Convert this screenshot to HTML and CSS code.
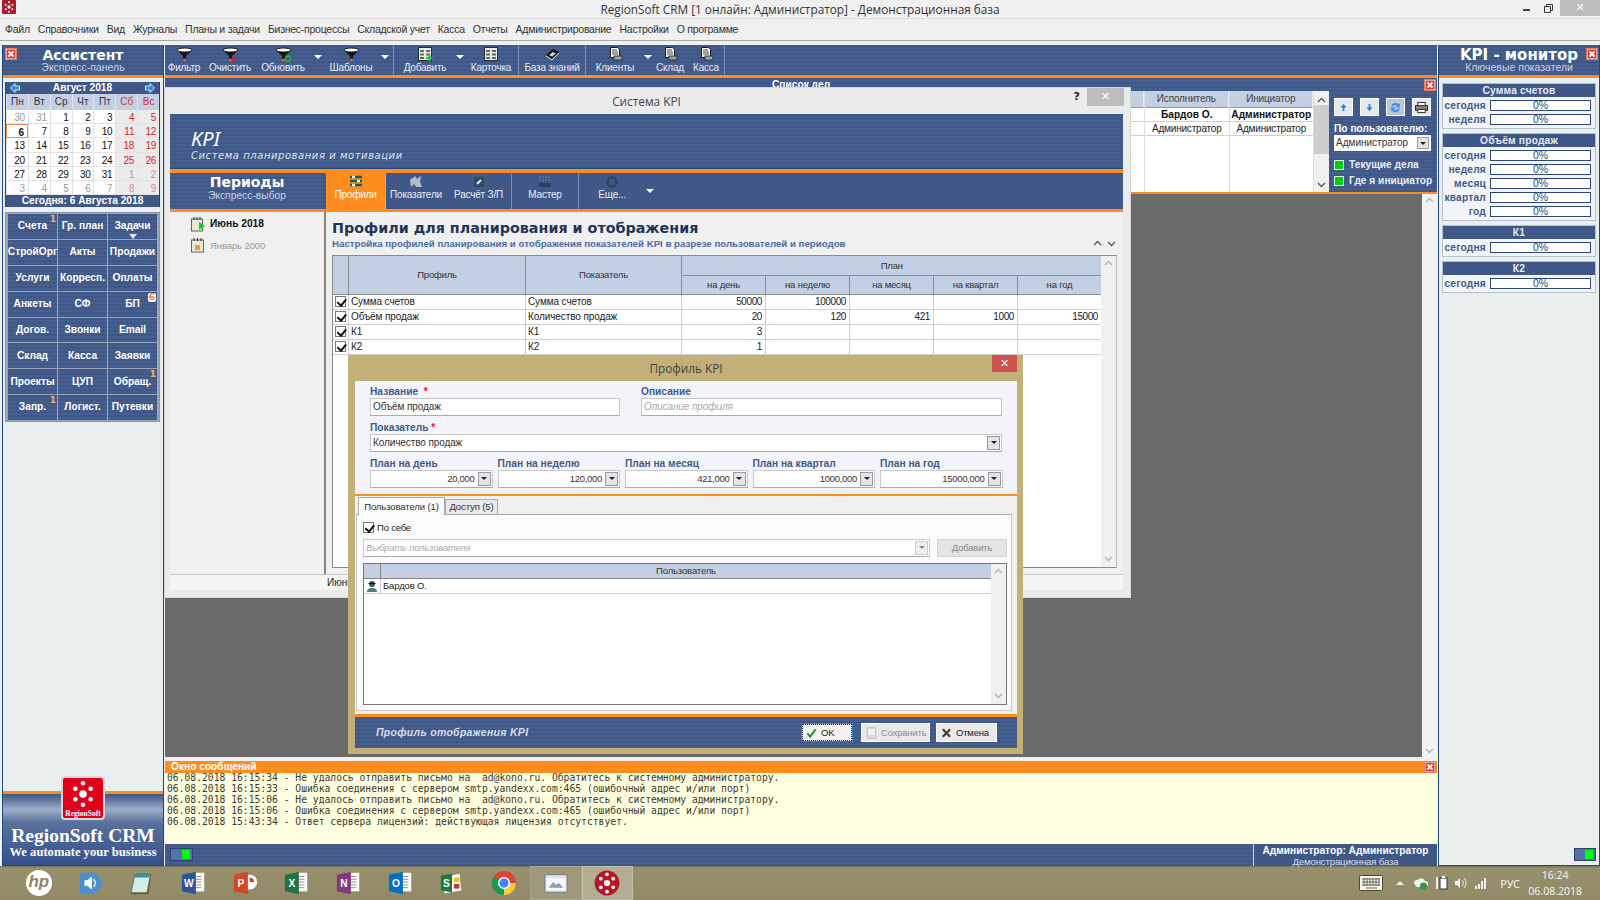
FILE: index.html
```html
<!DOCTYPE html>
<html lang="ru">
<head>
<meta charset="utf-8">
<title>RegionSoft CRM</title>
<link rel="stylesheet" href="styles.css">
</head>
<body>
<svg class="defs" aria-hidden="true">
  <defs>
    <g id="funnel"><path d="M3 4 8 9v3h3V9l5-5z" fill="#161616"/><ellipse cx="9.500" cy="3" rx="7.500" ry="2" fill="#fff" stroke="#111"/><circle cx="9.500" cy="13" r="1.500" fill="#e8642a"/></g>
    <g id="sheet"><rect x=".5" y=".5" width="13" height="13" fill="#e9eee6" stroke="#24302c"/><path d="M2 3h4v2H2zM2 6.500h4v2H2zM2 10h4v2H2zM8 3h4v2H8zM8 6.500h4v2H8zM8 10h4v2H8z" fill="#5d6b68"/></g>
    <g id="stack"><path d="M2.500.5h7l2 2v8h-9z" fill="#fff" stroke="#1b1b1b"/><path d="M4 3h5M4 5h6M4 7h6" stroke="#444"/><rect x="6" y="9" width="8" height="4" fill="#9aa5a0" stroke="#2c3a35"/></g>
    <g id="red-close"><rect x=".5" y=".5" width="11" height="11" fill="#fff" stroke="#e07a60"/><rect x="1.500" y="1.500" width="9" height="9" fill="#df3b2c"/><path d="M3.500 3.500l5 5M8.500 3.500l-5 5" stroke="#fff" stroke-width="1.800"/></g>
    <g id="dots"><circle cx="21" cy="7" r="3"/><circle cx="21" cy="35" r="3"/><circle cx="11" cy="14" r="3"/><circle cx="31" cy="14" r="3"/><circle cx="11" cy="28" r="3"/><circle cx="31" cy="28" r="3"/><circle cx="21" cy="21" r="5"/></g>
    <g id="chev-up"><path d="M2 6l3.500-3.500L9 6" fill="none" stroke="#555" stroke-width="1.300"/></g>
    <g id="chev-dn"><path d="M2 3l3.500 3.500L9 3" fill="none" stroke="#555" stroke-width="1.300"/></g>
    <g id="doc-lines"><rect x="10" y="3" width="15" height="20" fill="#fff"/><path d="M13 7h9M13 10h9M13 13h9M13 16h9M13 19h9" stroke="#8a8a8a"/></g>
  </defs>
</svg>

<header class="titlebar">
  <div class="tb-left"><svg class="app-ico" viewBox="0 0 42 42"><rect width="42" height="42" rx="4" fill="#a71d2a"/><use href="#dots" fill="#fff"/></svg></div>
  <div class="tb-title">RegionSoft CRM [1 онлайн: Администратор] - Демонстрационная база</div>
  <div class="tb-right">
    <span class="wc-min"></span>
    <svg class="wc-res" viewBox="0 0 9 9"><path d="M2.500 2V.5h6v6H7M.5 2.500h6v6h-6z" fill="none" stroke="#333"/></svg>
    <span class="wc-close">✕</span>
  </div>
</header>

<nav class="menubar">
  <span>Файл</span><span>Справочники</span><span>Вид</span><span>Журналы</span><span>Планы и задачи</span><span>Бизнес-процессы</span><span>Складской учет</span><span>Касса</span><span>Отчеты</span><span>Администрирование</span><span>Настройки</span><span>О программе</span>
</nav>

<main class="workspace">
  <aside class="side">
    <div class="side-head stripes">
      <svg class="xbtn side-x-l" viewBox="0 0 12 12"><use href="#red-close"/></svg>
      <div class="side-h1">Ассистент</div>
      <div class="side-h2">Экспресс-панель</div>
    </div>
    <div class="side-body">
      <section class="cal">
        <div class="cal-top">
          <svg class="cal-arrow" viewBox="0 0 10 10"><path d="M5 .5v2.500h4.500v4H5v2.500L.5 5z" fill="#2f8de4" stroke="#fff" stroke-width=".8"/></svg>
          <span>Август 2018</span>
          <svg class="cal-arrow" viewBox="0 0 10 10"><path d="M5 .5v2.500H.5v4H5v2.500L9.500 5z" fill="#2f8de4" stroke="#fff" stroke-width=".8"/></svg>
        </div>
        <div class="cal-days"><span>Пн</span><span>Вт</span><span>Ср</span><span>Чт</span><span>Пт</span><span class="we">Сб</span><span class="we">Вс</span></div>
        <div class="cal-grid">
          <span class="o">30</span><span class="o">31</span><span>1</span><span>2</span><span>3</span><span class="w">4</span><span class="w">5</span>
          <span class="today">6</span><span>7</span><span>8</span><span>9</span><span>10</span><span class="w">11</span><span class="w">12</span>
          <span>13</span><span>14</span><span>15</span><span>16</span><span>17</span><span class="w">18</span><span class="w">19</span>
          <span>20</span><span>21</span><span>22</span><span>23</span><span>24</span><span class="w">25</span><span class="w">26</span>
          <span>27</span><span>28</span><span>29</span><span>30</span><span>31</span><span class="wo">1</span><span class="wo">2</span>
          <span class="o">3</span><span class="o">4</span><span class="o">5</span><span class="o">6</span><span class="o">7</span><span class="wo">8</span><span class="wo">9</span>
        </div>
        <div class="cal-foot">Сегодня: 6 Августа 2018</div>
      </section>
      <section class="quick">
        <div class="qb stripes">Счета<i class="badge">1</i></div><div class="qb stripes">Гр. план</div><div class="qb stripes">Задачи<i class="tri"></i></div>
        <div class="qb stripes">СтройОрг</div><div class="qb stripes">Акты</div><div class="qb stripes">Продажи</div>
        <div class="qb stripes">Услуги</div><div class="qb stripes">Корресп.</div><div class="qb stripes">Оплаты</div>
        <div class="qb stripes">Анкеты</div><div class="qb stripes">СФ</div><div class="qb stripes">БП<i class="badge b-box">6</i></div>
        <div class="qb stripes">Догов.</div><div class="qb stripes">Звонки</div><div class="qb stripes">Email</div>
        <div class="qb stripes">Склад</div><div class="qb stripes">Касса</div><div class="qb stripes">Заявки</div>
        <div class="qb stripes">Проекты</div><div class="qb stripes">ЦУП</div><div class="qb stripes">Обращ.<i class="badge">1</i></div>
        <div class="qb stripes">Запр.<i class="badge">1</i></div><div class="qb stripes">Логист.</div><div class="qb stripes">Путевки</div>
      </section>
      <div class="brand">
        <div class="brand-logo">
          <svg class="brand-dots" viewBox="0 0 42 42"><use href="#dots" fill="#fff"/></svg>
          <span>RegionSoft</span>
        </div>
        <div class="brand-name">RegionSoft CRM</div>
        <div class="brand-tag">We automate your business</div>
      </div>
    </div>
  </aside>

  <section class="center">
    <div class="toolbar stripes">
      <div class="tool"><svg class="ti" viewBox="0 0 19 15"><use href="#funnel"/></svg><span>Фильтр</span></div>
      <div class="tool"><svg class="ti" viewBox="0 0 19 15"><use href="#funnel"/><path d="M11 10l4 4M15 10l-4 4" stroke="#e01b1b" stroke-width="1.500"/></svg><span>Очистить</span></div>
      <div class="tool"><svg class="ti" viewBox="0 0 19 15"><use href="#funnel"/><circle cx="14" cy="12" r="2.500" fill="none" stroke="#16b52a" stroke-width="1.400"/></svg><span>Обновить</span></div>
      <i class="dd"></i>
      <div class="tool"><svg class="ti" viewBox="0 0 19 15"><use href="#funnel"/><path d="M14 8v4M12 11l2 3 2-3" stroke="#1d5ee0" stroke-width="1.400" fill="none"/></svg><span>Шаблоны</span></div>
      <i class="dd dd-r"></i>
      <i class="tsep"></i>
      <div class="tool"><svg class="ti ti-s" viewBox="0 0 15 15"><use href="#sheet"/><path d="M11.500 8v6M8.500 11h6" stroke="#18c730" stroke-width="2"/></svg><span>Добавить</span></div>
      <i class="dd"></i>
      <div class="tool"><svg class="ti ti-s" viewBox="0 0 15 15"><use href="#sheet"/></svg><span>Карточка</span></div>
      <i class="tsep"></i>
      <div class="tool"><svg class="ti ti-s" viewBox="0 0 15 15"><path d="M1 8l7-6 6 3-7 7z" fill="#111"/><path d="M4 8l4-3 3 1.500-4 3z" fill="#cfd6cf"/><path d="M1 9l6 4 7-7" fill="none" stroke="#ddd"/></svg><span>База знаний</span></div>
      <i class="tsep"></i>
      <div class="tool"><svg class="ti ti-s" viewBox="0 0 15 15"><use href="#stack"/></svg><span>Клиенты</span></div>
      <i class="dd"></i>
      <div class="tool"><svg class="ti ti-s" viewBox="0 0 15 15"><use href="#stack"/></svg><span>Склад</span></div>
      <div class="tool"><svg class="ti ti-s" viewBox="0 0 15 15"><use href="#stack"/></svg><span>Касса</span></div>
      <i class="tsep"></i>
    </div>

    <div class="tasks stripes">
      <div class="tasks-head">
        <span>Список дел</span>
        <svg class="xbtn" viewBox="0 0 12 12"><use href="#red-close"/></svg>
      </div>
      <div class="tasks-main">
        <div class="tgrid">
          <div class="tcol tcol-fill"><div class="th"></div><div class="td"></div><div class="td"></div></div>
          <div class="tcol"><div class="th">Исполнитель</div><div class="td b">Бардов О.</div><div class="td">Администратор</div></div>
          <div class="tcol"><div class="th">Инициатор</div><div class="td b">Администратор</div><div class="td">Администратор</div></div>
          <div class="tscroll">
            <svg viewBox="0 0 11 9"><use href="#chev-up"/></svg>
            <div class="thumb"></div>
            <svg viewBox="0 0 11 9"><use href="#chev-dn"/></svg>
          </div>
        </div>
        <div class="tpanel">
          <div class="tbtns">
            <span class="tbtn"><svg viewBox="0 0 10 10"><path d="M5 1 1.500 5H4v4h2V5h2.500z" fill="#1b86e8"/></svg></span>
            <span class="tbtn"><svg viewBox="0 0 10 10"><path d="M5 9 1.500 5H4V1h2v4h2.500z" fill="#1b86e8"/></svg></span>
            <span class="tbtn tbtn-dark"><svg class="big" viewBox="0 0 12 12"><path d="M2 5a4 4 0 0 1 7-2l1-1v4H6l1.500-1.500A2.500 2.500 0 0 0 3.500 5zM10 7a4 4 0 0 1-7 2l-1 1V6h4L4.500 7.500A2.500 2.500 0 0 0 8.500 7z" fill="#3f8fe0"/></svg></span>
            <span class="tbtn"><svg class="big" viewBox="0 0 14 12"><rect x="3" y=".5" width="8" height="4" fill="#fff" stroke="#222"/><rect x=".5" y="4" width="13" height="5" fill="#888" stroke="#222"/><rect x="3" y="8" width="8" height="3.500" fill="#fff" stroke="#222"/></svg></span>
          </div>
          <div class="tp-label">По пользователю:</div>
          <div class="tselect"><span>Администратор</span><i class="combo-btn"></i></div>
          <div class="tcheck"><i class="greenbox"></i>Текущие дела</div>
          <div class="tcheck"><i class="greenbox"></i>Где я инициатор</div>
        </div>
      </div>
    </div>

    <div class="desk">
      <div class="desk-fill"></div>
      <div class="desk-scroll">
        <svg viewBox="0 0 11 9"><use href="#chev-up"/></svg>
        <svg viewBox="0 0 11 9"><use href="#chev-dn"/></svg>
      </div>
    </div>

    <div class="msgs">
      <div class="msgs-head"><span>Окно сообщений</span><svg class="xbtn" viewBox="0 0 12 12"><use href="#red-close"/></svg></div>
      <pre class="msgs-body">06.08.2018 16:15:34 - Не удалось отправить письмо на  ad@kono.ru. Обратитесь к системному администратору.
06.08.2018 16:15:33 - Ошибка соединения с сервером smtp.yandexx.com:465 (ошибочный адрес и/или порт)
06.08.2018 16:15:06 - Не удалось отправить письмо на  ad@kono.ru. Обратитесь к системному администратору.
06.08.2018 16:15:06 - Ошибка соединения с сервером smtp.yandexx.com:465 (ошибочный адрес и/или порт)
06.08.2018 15:43:34 - Ответ сервера лицензий: действующая лицензия отсутствует.</pre>
    </div>

    <div class="status stripes">
      <div class="toggle"><i></i></div>
      <div class="status-user"><b>Администратор: Администратор</b><span>Демонстрационная база</span></div>
    </div>

    <div class="kpi-win">
      <div class="win-title">
        <span>Система KPI</span>
        <b class="win-help">?</b>
        <span class="win-close">✕</span>
      </div>
      <div class="kpi-banner stripes">
        <div class="kpi-big">KPI</div>
        <div class="kpi-sub">Система планирования и мотивации</div>
      </div>
      <div class="kpi-bar">
        <div class="kb-head stripes"><div class="kb-h1">Периоды</div><div class="kb-h2">Экспресс-выбор</div></div>
        <div class="kb-tools">
          <div class="ktool active"><svg class="ki" viewBox="0 0 14 14"><path d="M1 2h12M1 6h12M1 10h12" stroke="#1d5b55" stroke-width="2.500"/><path d="M3 2h3M8 6h3M3 10h3" stroke="#eaf2ea" stroke-width="2.500"/></svg><span>Профили</span></div>
          <div class="ktool"><svg class="ki" viewBox="0 0 14 14"><path d="M1 5l5-4 2 3 4-3-1 6 2 5H7L5 9l-3 3z" fill="#b4bcc8"/></svg><span>Показатели</span></div>
          <div class="ktool"><svg class="ki" viewBox="0 0 14 14"><rect x="1" y="1" width="12" height="12" fill="#33476d" stroke="#556a62"/><path d="M5 9l4-4" stroke="#e9edf3" stroke-width="2"/></svg><span>Расчёт З/П</span></div>
          <i class="ksep"></i>
          <div class="ktool"><svg class="ki" viewBox="0 0 14 14"><rect x="1" y="8" width="12" height="4" fill="#2f3f5c"/><path d="M1 2h12M1 5h12" stroke="#6d7f9e" stroke-dasharray="2 1"/></svg><span>Мастер</span></div>
          <i class="ksep"></i>
          <div class="ktool"><svg class="ki" viewBox="0 0 14 14"><circle cx="7" cy="7" r="4.500" fill="none" stroke="#2f3f5c" stroke-width="3" stroke-dasharray="2 .8"/></svg><span>Еще...</span></div>
          <i class="dd"></i>
        </div>
      </div>
      <div class="kpi-body">
        <div class="periods">
          <div class="period cur"><svg class="pi" viewBox="0 0 14 15"><rect x=".5" y="2" width="11" height="12" fill="#e8e8d6" stroke="#576a62"/><path d="M3 0v3M6 0v3M9 0v3" stroke="#333"/><path d="M8 5v8l6-4z" fill="#1fcb23"/></svg><b>Июнь 2018</b></div>
          <div class="period"><svg class="pi" viewBox="0 0 14 15"><rect x=".5" y="2" width="12" height="12" fill="#e8e8d6" stroke="#576a62"/><path d="M3 0v3M6.500 0v3M10 0v3" stroke="#333"/><rect x="4" y="7" width="5" height="5" fill="#f09a3c"/></svg><span>Январь 2000</span></div>
        </div>
        <div class="content">
          <div class="content-main">
            <h1>Профили для планирования и отображения</h1>
            <div class="subline">
              <span>Настройка профилей планирования и отображения показателей KPI в разрезе пользователей и периодов</span>
              <svg viewBox="0 0 11 9"><use href="#chev-up"/></svg>
              <svg viewBox="0 0 11 9"><use href="#chev-dn"/></svg>
            </div>
            <div class="pgrid">
              <div class="pgrid-main">
                <table>
                  <colgroup><col class="c-chk"><col class="c-prof"><col class="c-ind"><col class="c-n"><col class="c-n"><col class="c-n"><col class="c-n"><col class="c-n"></colgroup>
                  <thead>
                    <tr><th rowspan="2"></th><th rowspan="2">Профиль</th><th rowspan="2">Показатель</th><th colspan="5">План</th></tr>
                    <tr><th>на день</th><th>на неделю</th><th>на месяц</th><th>на квартал</th><th>на год</th></tr>
                  </thead>
                  <tbody>
                    <tr><td><i class="chk"></i></td><td>Сумма счетов</td><td>Сумма счетов</td><td class="n">50000</td><td class="n">100000</td><td></td><td></td><td></td></tr>
                    <tr><td><i class="chk"></i></td><td>Объём продаж</td><td>Количество продаж</td><td class="n">20</td><td class="n">120</td><td class="n">421</td><td class="n">1000</td><td class="n">15000</td></tr>
                    <tr><td><i class="chk"></i></td><td>К1</td><td>К1</td><td class="n">3</td><td></td><td></td><td></td><td></td></tr>
                    <tr><td><i class="chk"></i></td><td>К2</td><td>К2</td><td class="n">1</td><td></td><td></td><td></td><td></td></tr>
                  </tbody>
                </table>
              </div>
              <div class="pscroll">
                <svg viewBox="0 0 11 9"><use href="#chev-up"/></svg>
                <svg viewBox="0 0 11 9"><use href="#chev-dn"/></svg>
              </div>
            </div>
          </div>
        </div>
      </div>
      <div class="kpi-status">Июнь</div>
    </div>

    <div class="dialog">
      <div class="dlg-title"><span>Профиль KPI</span><span class="dlg-close">✕</span></div>
      <div class="dlg-inner">
        <form class="dlg-form">
          <div class="f-two">
            <div><div class="lbl">Название <em>&nbsp;*</em></div><div class="inp">Объём продаж</div></div>
            <div><div class="lbl">Описание</div><div class="inp ph">Описание профиля</div></div>
          </div>
          <div class="lbl lbl-gap">Показатель <em>*</em></div>
          <div class="inp combo"><span>Количество продаж</span><i class="combo-btn"></i></div>
          <div class="f-five">
            <div><div class="lbl lbl-gap">План на день</div><div class="inp num"><span>20,000</span><i class="combo-btn"></i></div></div>
            <div><div class="lbl lbl-gap">План на неделю</div><div class="inp num"><span>120,000</span><i class="combo-btn"></i></div></div>
            <div><div class="lbl lbl-gap">План на месяц</div><div class="inp num"><span>421,000</span><i class="combo-btn"></i></div></div>
            <div><div class="lbl lbl-gap">План на квартал</div><div class="inp num"><span>1000,000</span><i class="combo-btn"></i></div></div>
            <div><div class="lbl lbl-gap">План на год</div><div class="inp num"><span>15000,000</span><i class="combo-btn"></i></div></div>
          </div>
        </form>
        <div class="dlg-tabs">
          <div class="tabs">
            <span class="tab on">Пользователи (1)</span>
            <span class="tab">Доступ (5)</span>
          </div>
          <div class="tabpage">
            <label class="self"><i class="chk chk-big"></i>По себе</label>
            <div class="pick">
              <div class="inp combo ph pick-sel"><span>Выбрать пользователя</span><i class="combo-btn dim"></i></div>
              <span class="addbtn">Добавить</span>
            </div>
            <div class="ugrid">
              <div class="ugrid-main">
                <div class="u-head"><span class="u-ic"></span><span class="u-name">Пользователь</span></div>
                <div class="u-row">
                  <span class="u-ic"><svg viewBox="0 0 12 13"><circle cx="6" cy="4" r="3" fill="#33594f"/><path d="M1 12c0-3 2-4 5-4s5 1 5 4z" fill="#4d8074"/><path d="M2.500 3.500h7" stroke="#111"/></svg></span>
                  <span class="u-name left">Бардов О.</span>
                </div>
              </div>
              <div class="pscroll">
                <svg viewBox="0 0 11 9"><use href="#chev-up"/></svg>
                <svg viewBox="0 0 11 9"><use href="#chev-dn"/></svg>
              </div>
            </div>
          </div>
        </div>
        <div class="dlg-foot stripes">
          <span class="foot-text">Профиль отображения KPI</span>
          <span class="fbtn ok"><svg viewBox="0 0 12 12"><path d="M1.500 6.500 4.500 10 10.500 2" fill="none" stroke="#2f8a3a" stroke-width="2.200"/></svg>OK</span>
          <span class="fbtn save"><svg viewBox="0 0 12 14"><path d="M1 1h10v12H1z" fill="#eee" stroke="#a8b0aa"/><path d="M3 9h6v4H3z" fill="#cdd"/></svg>Сохранить</span>
          <span class="fbtn cancel"><svg viewBox="0 0 12 12"><path d="M2 2l8 8M10 2l-8 8" stroke="#3d3d3d" stroke-width="2.400"/></svg>Отмена</span>
        </div>
      </div>
    </div>
  </section>

  <aside class="side">
    <div class="side-head stripes">
      <svg class="xbtn side-x-r" viewBox="0 0 12 12"><use href="#red-close"/></svg>
      <div class="side-h1 lg">KPI - монитор</div>
      <div class="side-h2">Ключевые показатели</div>
    </div>
    <div class="side-body mon">
      <section class="mcard">
        <h3>Сумма счетов</h3>
        <div class="mrows">
          <span>сегодня</span><b>0%</b>
          <span>неделя</span><b>0%</b>
        </div>
      </section>
      <section class="mcard">
        <h3>Объём продаж</h3>
        <div class="mrows">
          <span>сегодня</span><b>0%</b>
          <span>неделя</span><b>0%</b>
          <span>месяц</span><b>0%</b>
          <span>квартал</span><b>0%</b>
          <span>год</span><b>0%</b>
        </div>
      </section>
      <section class="mcard">
        <h3>К1</h3>
        <div class="mrows"><span>сегодня</span><b>0%</b></div>
      </section>
      <section class="mcard">
        <h3>К2</h3>
        <div class="mrows"><span>сегодня</span><b>0%</b></div>
      </section>
      <div class="mon-foot"><div class="toggle small"><i></i></div></div>
    </div>
  </aside>
</main>

<footer class="taskbar">
  <div class="task"><span class="hp">hp</span></div>
  <div class="task"><svg viewBox="0 0 28 28"><path d="M2 3h17l8 11-8 11H2z" fill="#4a90d0"/><path d="M7 11h3l5-4v14l-5-4H7z" fill="#fff"/><path d="M17 10a6 6 0 0 1 0 8" fill="none" stroke="#fff" stroke-width="1.500"/></svg></div>
  <div class="task"><svg viewBox="0 0 28 28"><path d="M6 4h18l-3 22H2z" fill="#6b5e3e"/><path d="M7 3h16l-4 21H3z" fill="#cfeee8"/><path d="M7 3h16l-1 5H6z" fill="#3f8f8c"/></svg></div>
  <div class="task"><svg viewBox="0 0 28 28"><use href="#doc-lines"/><path d="M1 5 16 2v24L1 23z" fill="#2b579a"/><text x="8.500" y="18" class="ot">W</text></svg></div>
  <div class="task"><svg viewBox="0 0 28 28"><circle cx="18" cy="13" r="8" fill="#fff"/><path d="M18 8v5h5a5 5 0 0 0-5-5z" fill="#d24726"/><path d="M1 5 16 2v24L1 23z" fill="#d24726"/><text x="8.500" y="18" class="ot">P</text></svg></div>
  <div class="task"><svg viewBox="0 0 28 28"><use href="#doc-lines"/><path d="M1 5 16 2v24L1 23z" fill="#217346"/><text x="8.500" y="18" class="ot">X</text></svg></div>
  <div class="task"><svg viewBox="0 0 28 28"><use href="#doc-lines"/><path d="M1 5 16 2v24L1 23z" fill="#80397b"/><text x="8.500" y="18" class="ot">N</text></svg></div>
  <div class="task"><svg viewBox="0 0 28 28"><use href="#doc-lines"/><path d="M1 5 16 2v24L1 23z" fill="#0072c6"/><text x="8.500" y="18" class="ot">O</text></svg></div>
  <div class="task"><svg viewBox="0 0 28 28"><path d="M4 8l18-4 2 18-18 3z" fill="#fff"/><path d="M2 6 14 4v20L2 22z" fill="#1e7a3a"/><text x="8" y="18" class="ot">S</text><path d="M16 8h6v5h-6z" fill="#f0c419"/><path d="M16 15h6v5h-6z" fill="#c23b2e"/></svg></div>
  <div class="task"><svg viewBox="0 0 28 28"><circle cx="14" cy="14" r="13" fill="#db4437"/><path d="M14 14 2.700 20.500A13 13 0 0 0 14 27c1 0 2-.1 3-.3z" fill="#0f9d58"/><path d="M14 14 2.700 20.500A13 13 0 0 1 3 7.500z" fill="#0f9d58"/><path d="M14 14h12.800A13 13 0 0 1 14 27z" fill="#ffcd40"/><circle cx="14" cy="14" r="6.500" fill="#fff"/><circle cx="14" cy="14" r="5" fill="#4285f4"/></svg></div>
  <div class="task task-hl"><svg viewBox="0 0 28 28"><rect x="2" y="5" width="24" height="19" rx="2" fill="#dfe3e6" stroke="#6e7378"/><rect x="4" y="9" width="20" height="13" fill="#f6f8fa"/><path d="M6 19l5-6 3 3 3-2 5 5z" fill="#8ba0b5"/></svg></div>
  <div class="task task-on"><svg viewBox="0 0 42 42"><circle cx="21" cy="21" r="20" fill="#b8142a"/><use href="#dots" fill="#fff"/></svg></div>
  <div class="tray">
    <svg class="tr-kb" viewBox="0 0 24 16"><rect x=".5" y=".5" width="23" height="15" rx="1" fill="#f7f6ee" stroke="#4a4636"/><path d="M3 4h18M3 7h18M3 10h18M5 3v8M8 3v8M11 3v8M14 3v8M17 3v8M20 3v8M7 13h11" stroke="#6a6650"/></svg>
    <i class="tr-up"></i>
    <svg class="tr-i" viewBox="0 0 14 14"><path d="M1 9a3 3 0 0 1 3-5 4 4 0 0 1 7 1 3 3 0 0 1 0 6H3z" fill="#f3f3ee"/><circle cx="9.500" cy="10" r="3.500" fill="#2d9b46"/></svg>
    <svg class="tr-i" viewBox="0 0 14 14"><rect x="6" y="2" width="7" height="11" fill="#fff" stroke="#333"/><path d="M3 1v12" stroke="#eee" stroke-width="2"/><rect x="8" y="0" width="3" height="2" fill="#fff"/></svg>
    <svg class="tr-i" viewBox="0 0 14 14"><path d="M1 5h2l3-3v10L3 9H1z" fill="#f3f3ee"/><path d="M8 4a4 4 0 0 1 0 6M10 2a7 7 0 0 1 0 10" fill="none" stroke="#f3f3ee"/></svg>
    <svg class="tr-i" viewBox="0 0 14 14"><path d="M1 10h2v3H1zM4 8h2v5H4zM7 5h2v8H7zM10 2h2v11h-2z" fill="#f3f3ee"/></svg>
    <span class="tr-lang">РУС</span>
    <span class="tr-clock"><span>16:24</span><span>06.08.2018</span></span>
  </div>
</footer>
</body>
</html>
```

FILE: styles.css
```css
* { box-sizing: border-box; }
html, body { margin: 0; padding: 0; }
body {
  width: 1600px;
  height: 900px;
  overflow: hidden;
  display: flex;
  flex-direction: column;
  background: #f0f0f0;
  color: #222;
  font: 10px/1.2 "Liberation Sans", sans-serif;
}
i, em { font-style: normal; }
.defs { position: absolute; width: 0; height: 0; }
.stripes { background: repeating-linear-gradient(#3f5888 0 2px, #455e8e 2px 4px); }
.xbtn { width: 12px; height: 12px; flex: none; display: block; }

/* title + menu */
.titlebar {
  height: 19px;
  flex: none;
  display: grid;
  grid-template-columns: 1fr auto 1fr;
  align-items: start;
  border-bottom: 1px solid #dcdcdc;
}
.tb-left { height: 16px; padding-left: 2px; }
.app-ico { width: 14px; height: 14px; display: block; }
.tb-title { font: 11.8px/19px "Open Sans", sans-serif; color: #333; }
.tb-right { display: flex; justify-content: flex-end; align-items: center; height: 16px; }
.wc-min { width: 7px; height: 2px; background: #444; margin: 4px 14px 0 0; }
.wc-res { width: 9px; height: 9px; margin: 0 7px 0 0; }
.wc-close { width: 40px; height: 16px; background: #bdbdbd; color: #fff; text-align: center; font: 11px/15px "DejaVu Sans", sans-serif; }
.menubar {
  height: 22px;
  flex: none;
  display: flex;
  gap: 8px;
  align-items: center;
  padding: 0 0 1px 5px;
  border-bottom: 1px solid #a8a8a8;
  background: #f0f0f0;
  font-size: 10.5px;
  letter-spacing: -.25px;
  line-height: 1;
  color: #333;
}

/* main 3 columns */
.workspace {
  flex: 1;
  min-height: 0;
  display: grid;
  grid-template-columns: 162px 1272px 162px;
  column-gap: 1px;
  padding: 4px 0 0 2px;
  background: #f0f0f0;
}
.side {
  border: 1px solid #1f4685;
  border-top-width: 0;
  display: flex;
  flex-direction: column;
  min-height: 0;
  background: #e9eeee;
}
.side-head {
  height: 33px;
  flex: none;
  position: relative;
  text-align: center;
  border-bottom: 3px solid #ff8c1f;
  color: #fff;
}
.side-x-l { position: absolute; left: 2px; top: 3px; }
.side-x-r { position: absolute; right: 1px; top: 3px; }
.side-h1 { font: bold 14px/17px "DejaVu Sans", sans-serif; padding-top: 2px; height: 18px; }
.side-h1.lg { font-size: 15px; }
.side-h2 { font-size: 10.5px; line-height: 9px; color: #c9d3e6; }
.side-body { flex: 1; display: flex; flex-direction: column; min-height: 0; padding: 4px 2px 0; }

/* calendar */
.cal { border: 1px solid #1f4685; border-top: 0; border-bottom: 0; width: 155px; background: #fff; flex: none; }
.cal-top {
  height: 12px;
  background: #3f5888;
  color: #fff;
  display: flex;
  justify-content: space-between;
  align-items: center;
  padding: 0 4px;
  font: bold 10.2px/12px "Liberation Sans", sans-serif;
}
.cal-arrow { width: 10px; height: 10px; }
.cal-days {
  height: 16px;
  display: grid;
  grid-template-columns: repeat(7, minmax(0, 1fr));
  background: #c3cfe3;
  text-align: center;
  line-height: 16px;
  color: #333;
}
.cal-days span { border-left: 1px solid #dfe5ef; }
.cal-days .we { color: #d2343c; }
.cal-grid {
  height: 85px;
  display: grid;
  grid-template-columns: repeat(7, minmax(0, 1fr));
  grid-template-rows: repeat(6, minmax(0, 1fr));
  font-size: 10px;
  letter-spacing: -.3px;
  line-height: 10px;
  color: #111;
}
.cal-grid span {
  text-align: right;
  padding: 3px 3px 0 0;
  border-left: 1px solid #e3e3e3;
  border-bottom: 1px solid #e3e3e3;
}
.cal-grid .o { color: #9a9a9a; }
.cal-grid .w { color: #d22; background: #ebebeb; }
.cal-grid .wo { color: #e08a8a; background: #ebebeb; }
.cal-grid .today { border: 1px solid #ef8a5a; font-weight: bold; }
.cal-foot {
  height: 12px;
  background: #3f5888;
  color: #fff;
  text-align: center;
  font: bold 10.2px/12px "Liberation Sans", sans-serif;
}

/* quick buttons */
.quick {
  margin-top: 5px;
  width: 155px;
  height: 210px;
  flex: none;
  display: grid;
  grid-template-columns: repeat(3, minmax(0, 1fr));
  grid-template-rows: repeat(8, minmax(0, 1fr));
  gap: 1px;
  padding: 1px 2px;
  background: #9aa5b8;
  border: 1px solid #8b96a8;
}
.qb {
  position: relative;
  display: flex;
  align-items: center;
  justify-content: center;
  color: #fff;
  font: bold 10.2px/1 "Liberation Sans", sans-serif;
  white-space: nowrap;
}
.badge {
  position: absolute;
  top: 1px;
  right: 1px;
  color: #f6b26b;
  font: bold 9px/1 "DejaVu Sans", sans-serif;
}
.b-box { background: #fff; color: #ef7f2a; padding: 0 1px; border-radius: 2px; }
.tri {
  position: absolute;
  bottom: 0;
  left: 50%;
  margin-left: -4px;
  border: 4px solid transparent;
  border-top: 5px solid #dfe5ef;
  border-bottom: 0;
}

/* brand */
.brand {
  margin: auto -2px 0;
  height: 74px;
  flex: none;
  position: relative;
  border-top: 3px solid #ff8c1f;
  color: #fff;
  text-align: center;
  padding-top: 32px;
  background: linear-gradient(#3b5585 0, #9fadc7 22%, #5a719d 40%, #34508a 100%);
}
.brand-logo {
  position: absolute;
  left: 58px;
  top: -18px;
  width: 44px;
  height: 44px;
  background: #e0001b;
  border: 2px solid #d8d8d8;
  border-radius: 4px;
  color: #fff;
}
.brand-dots { width: 32px; height: 32px; display: block; margin: 0 auto; }
.brand-logo span { display: block; font: bold 7.5px/8px "Liberation Serif", serif; }
.brand-name { font: bold 19.5px/19px "Liberation Serif", serif; }
.brand-tag { font: bold 12.6px/15px "Liberation Serif", serif; }

/* center */
.center { position: relative; display: flex; flex-direction: column; min-height: 0; }
.toolbar {
  height: 33px;
  flex: none;
  display: grid;
  grid-template-columns: 32px 60px 46px 24px 42px 21px 1px 62px 8px 54px 1px 66px 1px 58px 8px 36px 36px 1px;
  padding-left: 3px;
  border-bottom: 3px solid #ff8c1f;
  color: #fff;
}
.tool { display: flex; flex-direction: column; align-items: center; justify-content: flex-end; white-space: nowrap; padding-bottom: 2px; }
.tool span { color: #e8edf6; line-height: 11px; letter-spacing: -.2px; }
.ti { width: 19px; height: 15px; }
.ti-s { width: 15px; }
.tsep { background: #7f93b7; }
.dd {
  width: 0;
  height: 0;
  align-self: center;
  justify-self: center;
  border: 4px solid transparent;
  border-top: 4px solid #fff;
  border-bottom: 0;
  margin-top: -6px;
}
.dd-r { margin-left: 5px; }
.tasks {
  height: 116px;
  flex: none;
  display: flex;
  flex-direction: column;
  border-bottom: 2px solid #ff8c1f;
  color: #fff;
}
.tasks-head {
  height: 12px;
  flex: none;
  display: flex;
  justify-content: space-between;
  align-items: flex-start;
  padding: 1px 1px 0 607px;
  font: bold 10.2px/12px "Liberation Sans", sans-serif;
}
.tasks-main { flex: 1; display: flex; min-height: 0; margin-top: 1px; }
.tgrid { flex: 1; display: flex; background: #fff; color: #222; }
.tcol { width: 84.5px; border-right: 1px solid #dcdcdc; text-align: center; }
.tcol-fill { flex: 1; }
.th { height: 17px; background: #c3cfe3; border-bottom: 1px solid #999; border-right: 1px solid #e8ecf4; line-height: 16px; color: #444; letter-spacing: -.15px; }
.td { height: 14px; border-bottom: 1px solid #cfcfcf; line-height: 13px; letter-spacing: -.2px; }
.td.b { font: bold 10.2px/13px "Liberation Sans", sans-serif; color: #111; letter-spacing: 0; }
.tscroll {
  width: 15px;
  background: #f0f0f0;
  display: flex;
  flex-direction: column;
  align-items: center;
  padding: 5px 0 3px;
}
.tscroll svg, .desk-scroll svg, .pscroll svg, .subline svg { width: 11px; height: 9px; flex: none; }
.thumb { width: 100%; height: 49px; background: #cdcdcd; margin-bottom: auto; }
.tpanel { width: 108px; flex: none; padding: 7px 6px 0 5px; }
.tbtns { display: flex; gap: 7px; }
.tbtn { width: 19px; height: 18px; background: #e5e8ee; border: 1px solid #fff; display: flex; align-items: center; justify-content: center; }
.tbtn svg { width: 9px; height: 9px; }
.tbtn svg.big { width: 13px; height: 13px; }
.tbtn-dark { background: #b9c6dc; }
.tp-label { font: bold 10.2px/12px "Liberation Sans", sans-serif; margin-top: 7px; white-space: nowrap; }
.tselect { width: 97px; height: 16px; background: #fff; color: #333; display: flex; justify-content: space-between; align-items: center; padding: 0 2px; }
.tcheck { display: flex; align-items: center; gap: 5px; font: bold 10.2px/12px "Liberation Sans", sans-serif; margin-top: 4px; color: #e9eef7; white-space: nowrap; height: 12px; }
.tselect + .tcheck { margin-top: 8px; }
.greenbox { width: 10px; height: 10px; background: #0c0; border: 1px solid #dfe; flex: none; }
.combo-btn { width: 12px; height: 12px; background: #e4e4e4; border: 1px solid #999; position: relative; flex: none; }
.combo-btn::after { content: ""; position: absolute; left: 2px; top: 4px; border: 3px solid transparent; border-top: 3px solid #222; border-bottom: 0; }
.combo-btn.dim { background: #eee; border-color: #ccc; }
.combo-btn.dim::after { border-top-color: #888; }

.desk { flex: 1; min-height: 0; display: flex; }
.desk-fill { flex: 1; background: #6a6a6a; }
.desk-scroll { width: 15px; display: flex; flex-direction: column; justify-content: space-between; align-items: center; background: #f2f2f2; padding: 2px 0 2px; }
.desk-scroll svg { opacity: .4; }

/* messages */
.msgs { height: 83px; flex: none; margin-top: 4px; background: #ffffdf; display: flex; flex-direction: column; }
.msgs-head { height: 12px; flex: none; background: #ff8c1f; color: #fff; font: bold 10.2px/12px "Liberation Sans", sans-serif; display: flex; justify-content: space-between; padding: 0 1px 0 6px; }
.msgs-body { margin: 0; padding: 0 0 0 2px; font: 9.7px/10.9px "DejaVu Sans Mono", monospace; color: #3a3a30; }
.status { height: 22px; flex: none; display: flex; justify-content: space-between; align-items: stretch; color: #fff; }
.toggle { width: 23px; height: 13px; background: #5471aa; border: 1px solid #2d4470; display: flex; justify-content: flex-end; padding: 1px 2px; margin: 4px 0 0 5px; }
.toggle i { width: 8px; height: 9px; background: #0f0; }
.status-user { width: 184px; border-left: 1px solid #c7d1e2; background: #3f5888; text-align: center; display: flex; flex-direction: column; }
.status-user b { font: bold 10.2px/13px "Liberation Sans", sans-serif; }
.status-user span { font-size: 9.6px; letter-spacing: -.15px; line-height: 9px; color: #d7deeb; }

/* KPI window */
.kpi-win {
  position: absolute;
  left: 0;
  top: 43px;
  width: 965px;
  height: 509px;
  background: #ebebeb;
  padding: 0 7px 7px 5px;
  display: flex;
  flex-direction: column;
  box-shadow: 0 0 0 1px #d7d7d7;
}
.win-title { height: 26px; flex: none; position: relative; text-align: center; font: 11.8px/27px "Open Sans", sans-serif; color: #444; }
.win-help { position: absolute; right: 43px; top: 0; font: bold 11px/18px "DejaVu Sans", sans-serif; color: #222; }
.win-close { position: absolute; right: -1px; top: 0; width: 37px; height: 18px; background: #bdbdbd; color: #fff; font: 11px/18px "DejaVu Sans", sans-serif; text-align: center; }
.kpi-banner { height: 55px; flex: none; color: #fff; padding: 14px 0 0 21px; border-bottom: 1px solid #1b4a86; }
.kpi-big { font: italic 20px/22px "Noto Sans", sans-serif; }
.kpi-sub { font: italic 10px/12px "DejaVu Sans", sans-serif; letter-spacing: .55px; color: #dbe2ef; }
.kpi-bar {
  height: 43px;
  flex: none;
  display: flex;
  border-top: 4px solid #ff8c1f;
  border-bottom: 3px solid #ff8c1f;
  background: #3f5888;
  color: #fff;
}
.kb-head { width: 154px; text-align: center; flex: none; }
.kb-h1 { font: bold 14px/16px "DejaVu Sans", sans-serif; padding-top: 1px; height: 17px; }
.kb-h2 { font-size: 10.3px; line-height: 11px; color: #c9d3e6; }
.kb-tools { flex: 1; display: grid; grid-template-columns: 60px 60px 65px 1px 66px 1px 66px 10px; margin-left: 2px; grid-template-rows: 36px; }
.kb-tools .dd { margin-top: 0; }
.ktool { display: flex; flex-direction: column; align-items: center; white-space: nowrap; padding-top: 2px; color: #e8edf6; }
.ktool span { line-height: 12px; letter-spacing: -.2px; }
.ktool.active { background: #ff8c1f; color: #fff; border-right: 1px solid #fff3; }
.ki { width: 14px; height: 14px; flex: none; }
.ksep { background: #7f93b7; }
.kpi-body { flex: 1; min-height: 0; display: flex; background: #f0f0f0; }
.periods { width: 154px; flex: none; padding: 2px 0 0 21px; }
.period { display: flex; align-items: center; gap: 5px; height: 21px; color: #999; font-size: 9.5px; letter-spacing: -.1px; }
.period b { font: bold 10.2px/1 "Liberation Sans", sans-serif; color: #111; letter-spacing: 0; }
.pi { width: 14px; height: 15px; flex: none; }
.content { flex: 1; border-left: 2px solid #8a817c; min-width: 0; padding: 6px 6px 0 6px; }
.content h1 { margin: 0; font: bold 14.3px/20px "DejaVu Sans", sans-serif; color: #1e3458; white-space: nowrap; }
.subline { display: flex; align-items: center; height: 11px; font: bold 9.7px/11px "Liberation Sans", sans-serif; color: #4a6ca5; white-space: nowrap; margin-bottom: 6px; }
.subline span { flex: 1; }
.subline svg { margin-left: 3px; }
.pgrid { display: flex; height: 313px; border: 1px solid #8a8a8a; border-right-color: #bbb; background: #fff; }
.pgrid-main { flex: 1; min-width: 0; }
table { border-collapse: collapse; table-layout: fixed; width: 768.5px; }
.c-chk { width: 15.5px; }
.c-prof { width: 177px; }
.c-ind { width: 156px; }
.c-n { width: 84px; }
th { height: 19px; background: #c3cfe3; border: 1px solid #8c8c8c; border-top: 0; font-weight: normal; font-size: 9.5px; letter-spacing: -.2px; color: #333; padding: 0; }
thead tr:first-child th[colspan] { border-right: 0; }
thead tr:nth-child(2) th { border-right: 1px solid #8c8c8c; }
th:first-child { border-left: 0; }
th:last-child { border-right: 0; }
td { height: 15px; border: 1px solid #cfcfcf; border-top: 0; padding: 0 2px; line-height: 13px; color: #222; white-space: nowrap; letter-spacing: -.1px; }
td:first-child { border-left: 0; padding: 0; text-align: center; }
td.n { text-align: right; padding-right: 3px; letter-spacing: -.4px; }
.chk {
  display: block;
  width: 11px;
  height: 11px;
  margin: 0 0 1px 2px;
  border: 1px solid #777;
  background: #fff;
  position: relative;
}
.chk::after {
  content: "";
  position: absolute;
  left: 2.500px;
  top: 0;
  width: 3.500px;
  height: 6.500px;
  border: solid #111;
  border-width: 0 2px 2px 0;
  transform: rotate(40deg);
}
.pscroll { width: 15px; flex: none; background: #f0f0f0; display: flex; flex-direction: column; justify-content: space-between; align-items: center; padding: 3px 0 4px; }
.pscroll svg { opacity: .4; }
.kpi-status { height: 16px; flex: none; background: #f5f5f5; border-top: 1px solid #ccc; padding-left: 157px; margin-top: -16px; position: relative; line-height: 15px; }

/* dialog */
.dialog {
  position: absolute;
  left: 183px;
  top: 310px;
  width: 675px;
  height: 399px;
  background: #c2b077;
  padding: 0 6px 6px 7px;
  display: flex;
  flex-direction: column;
}
.dlg-title { height: 26px; flex: none; position: relative; text-align: center; font: 11.8px/26px "Open Sans", sans-serif; color: #444; }
.dlg-close { position: absolute; right: 0; top: 0; width: 25px; height: 17px; background: #cf5050; color: #fff; font: 11px/17px "DejaVu Sans", sans-serif; }
.dlg-inner { flex: 1; min-height: 0; display: flex; flex-direction: column; background: #f0f0f0; }
.dlg-form { height: 115px; flex: none; padding: 4px 15px 0; background: #f3f4f9; border-bottom: 2px solid #ff8c1f; }
.lbl { height: 13px; font: bold 10.2px/13px "Liberation Sans", sans-serif; color: #3d5a8e; white-space: nowrap; }
.lbl em { color: #e11; }
.lbl-gap { margin-top: 5px; }
.f-two { display: grid; grid-template-columns: 250px 361px; column-gap: 21px; }
.f-five { display: grid; grid-template-columns: repeat(5, 122.5px); column-gap: 5px; }
.inp {
  height: 18px;
  background: #fff;
  border: 1px solid #c9c9c9;
  border-bottom-color: #aaa;
  line-height: 16px;
  padding: 0 2px;
  color: #333;
  letter-spacing: -.1px;
}
.ph { color: #aaa; font-style: italic; }
.combo, .num { display: flex; align-items: center; justify-content: space-between; padding-right: 1px; }
.num { justify-content: flex-end; gap: 3px; font-size: 9.5px; letter-spacing: -.3px; }
.num .combo-btn, .combo .combo-btn { width: 13px; height: 14px; }
.num .combo-btn::after, .combo .combo-btn::after { left: 2.500px; top: 4px; }
.dlg-tabs { flex: 1; min-height: 0; padding: 1px 5px 3px 1px; display: flex; flex-direction: column; }
.tabs { height: 18px; flex: none; display: flex; align-items: flex-end; padding-left: 2px; border-bottom: 1px solid #aaa; position: relative; }
.tab { width: 53px; height: 15px; text-align: center; line-height: 14px; border: 1px solid #aaa; border-bottom: 0; background: #e8e8e8; color: #333; font-size: 9.5px; letter-spacing: -.1px; }
.tab.on { width: 87px; height: 18px; margin-bottom: -1px; background: #fbfbfb; padding-top: 2px; }
.tabpage { flex: 1; min-height: 0; background: #fbfbfb; border: 1px solid #c8c8c8; border-top: 0; padding: 7px 4px 5px 6px; display: flex; flex-direction: column; }
.self { height: 11px; display: flex; align-items: center; gap: 3px; font-size: 9.5px; letter-spacing: -.2px; }
.chk-big { margin: 0; width: 11px; height: 11px; flex: none; }
.pick { display: flex; justify-content: space-between; margin-top: 6px; height: 18px; flex: none; }
.pick-sel { width: 567px; font-size: 9.5px; letter-spacing: -.2px; }
.addbtn { width: 70px; height: 18px; background: #e4e4e4; border: 1px solid #d4d4d4; text-align: center; line-height: 16px; color: #888; font-size: 9.5px; letter-spacing: -.2px; }
.ugrid { flex: 1; min-height: 0; margin-top: 6px; display: flex; border: 1px solid #777; background: #fff; }
.ugrid-main { flex: 1; }
.u-head, .u-row { display: flex; height: 15px; border-bottom: 1px solid #ccc; align-items: center; font-size: 9.5px; letter-spacing: -.15px; }
.u-head { background: #c3cfe3; border-bottom-color: #888; color: #333; }
.u-ic { width: 17px; height: 100%; border-right: 1px solid #888; flex: none; display: flex; align-items: center; justify-content: center; }
.u-row .u-ic { border-right-color: #ccc; }
.u-ic svg { width: 12px; height: 13px; }
.u-name { flex: 1; text-align: center; }
.u-name.left { text-align: left; padding-left: 2px; }
.dlg-foot { height: 34px; flex: none; border-top: 3px solid #ff8c1f; display: flex; align-items: center; padding: 0 20px 0 21px; gap: 8px; color: #fff; }
.foot-text { flex: 1; font: italic bold 10.5px/1 "Liberation Sans", sans-serif; color: #d6deec; letter-spacing: .3px; }
.fbtn { height: 19px; flex: none; background: #e9e9e9; border: 1px solid #fff; color: #222; display: flex; align-items: center; gap: 4px; padding-left: 4px; font-size: 9.5px; letter-spacing: -.2px; }
.fbtn svg { width: 11px; height: 12px; flex: none; }
.ok { width: 52px; background: #f2f2f2; outline: 1px dotted #124; outline-offset: -2px; border-color: #2b7fd8; }
.save { width: 69px; color: #8d8d8d; }
.cancel { width: 61px; margin-left: -2px; }

/* KPI monitor */
.mon { padding: 5px 3px 0; gap: 4px; }
.mcard { border: 1px solid #b4bdcc; background: #f2f4f8; flex: none; }
.mcard h3 { margin: 0; height: 13px; background: #3f5888; color: #e6ebf4; text-align: center; font: bold 10.2px/13px "Liberation Sans", sans-serif; letter-spacing: .2px; }
.mrows { display: grid; grid-template-columns: 43px 101px; column-gap: 4px; row-gap: 3px; grid-auto-rows: 11px; padding: 3px 0; }
.mrows span { text-align: right; font: bold 10.2px/11px "Liberation Sans", sans-serif; color: #3d5a8e; white-space: nowrap; letter-spacing: .2px; }
.mrows b { border: 1px solid #2d4675; background: #fff; text-align: center; font: normal 10.5px/9px "Liberation Sans", sans-serif; color: #2d4675; }
.mon-foot { margin-top: auto; display: flex; justify-content: flex-end; padding-bottom: 4px; }
.toggle.small { margin: 0; width: 22px; }

/* taskbar */
.taskbar {
  height: 34px;
  flex: none;
  display: flex;
  align-items: center;
  padding-left: 13px;
  background: linear-gradient(#757056 0, #97906d 2px, #928a67 100%);
  color: #f4f3ea;
}
.task { width: 51.700px; height: 34px; display: flex; align-items: center; justify-content: center; flex: none; }
.task svg { width: 26px; height: 26px; }
.task-hl { background: #9f987a; box-shadow: inset 0 0 0 1px #aaa48a; }
.task-on { background: #b3ad92; box-shadow: inset 0 0 0 1px #c4bfa8; }
.hp {
  width: 26px;
  height: 26px;
  border-radius: 50%;
  background: #fff;
  color: #8e8662;
  font: italic bold 17px/24px "Liberation Sans", sans-serif;
  text-align: center;
}
.ot { font: bold 11px "Liberation Sans", sans-serif; fill: #fff; text-anchor: middle; }
.tray { margin-left: auto; display: flex; align-items: center; height: 34px; padding-right: 18px; }
.tr-kb { width: 24px; height: 16px; margin-right: 13px; }
.tr-up { border: 4px solid transparent; border-bottom: 4px solid #f4f3ea; border-top: 0; margin-right: 10px; }
.tr-i { width: 14px; height: 14px; margin-right: 6px; }
.tr-lang { font: 11px "Noto Sans", sans-serif; margin: 0 5px 0 6px; width: 23px; }
.tr-clock { display: flex; flex-direction: column; align-items: center; font: 10.5px/16px "Noto Sans", sans-serif; }
```
